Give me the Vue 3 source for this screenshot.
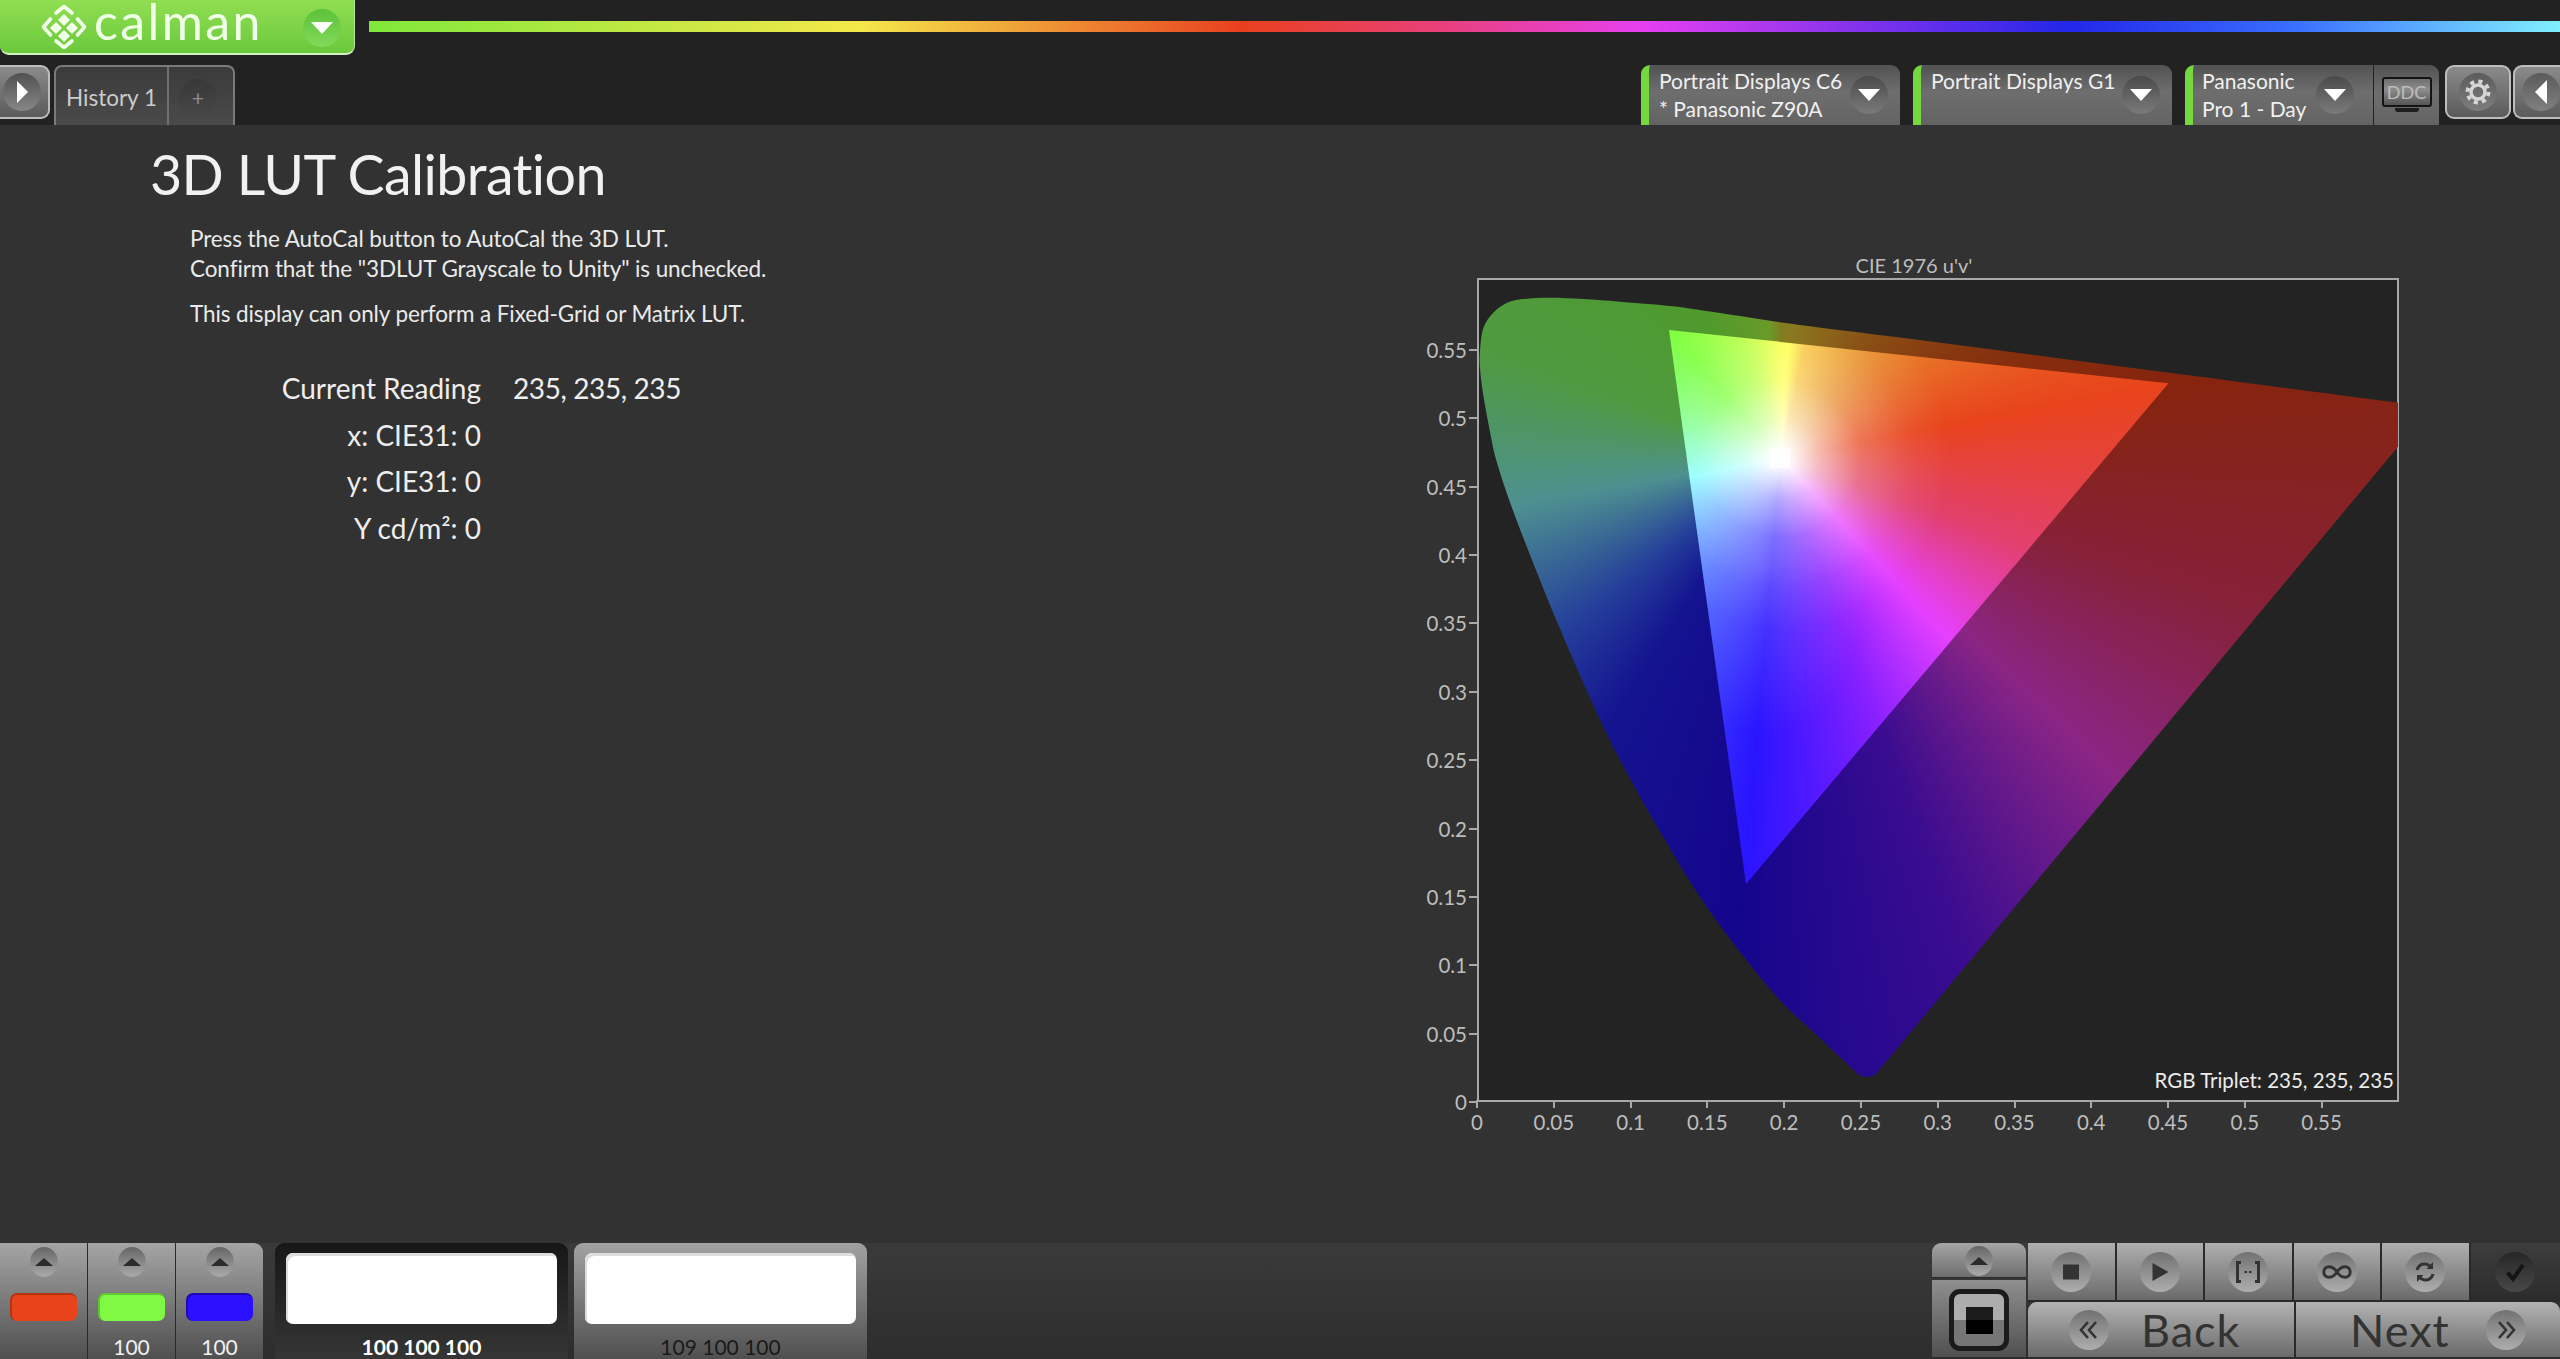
<script setup>
const plotH = 823
const ticks = [0, 0.05, 0.1, 0.15, 0.2, 0.25, 0.3, 0.35, 0.4, 0.45, 0.5, 0.55]
const xTicks = ticks.map((v) => ({ v, left: (v * 1535.6 - 2).toFixed(1) + 'px' }))
const yTicks = ticks.map((v) => ({ v, top: (plotH - v * 1367.3 - 1).toFixed(1) + 'px' }))
const transport = ['stop', 'play', 'range', 'loop', 'sync']
const swatches = [
  { color: '#e8441c', edge: '#b5330f', label: '' },
  { color: '#80f944', edge: '#5fc732', label: '100' },
  { color: '#2a10ff', edge: '#1c0ab0', label: '100' }
]
const readings = [
  { label: 'Current Reading', value: '235, 235, 235' },
  { label: 'x: CIE31: 0', value: '' },
  { label: 'y: CIE31: 0', value: '' },
  { label: 'Y cd/m²: 0', value: '' }
]

// Spectral locus traced from the chart, in plot pixels: bottom vertex, up the left side, along the top.
const locus = [
  [382, 796], [337.5, 754], [305.6, 724], [267, 678], [223, 618], [181, 549], [143, 481], [114, 421], [79.3, 341],
  [53.7, 277.7], [34.6, 227.7], [19.7, 182.7], [13, 152.7], [6.3, 116], [3, 89], [3, 72.7], [6.3, 49.3], [16, 34],
  [29.7, 24], [46, 20], [73, 18.7], [106, 20], [143, 22.7], [193, 27], [233, 32.5], [323, 46], [423, 58.5], [523, 71.5],
  [623, 84.7], [723, 97.7], [921, 123.7]
]
function smooth(points) {
  let d = ''
  for (let i = 0; i < points.length - 1; i++) {
    const p0 = points[Math.max(i - 1, 0)]
    const p1 = points[i]
    const p2 = points[i + 1]
    const p3 = points[Math.min(i + 2, points.length - 1)]
    const c1 = [p1[0] + (p2[0] - p0[0]) / 6, p1[1] + (p2[1] - p0[1]) / 6]
    const c2 = [p2[0] - (p3[0] - p1[0]) / 6, p2[1] - (p3[1] - p1[1]) / 6]
    d += ` C${c1[0].toFixed(1)} ${c1[1].toFixed(1)} ${c2[0].toFixed(1)} ${c2[1].toFixed(1)} ${p2[0]} ${p2[1]}`
  }
  return d
}
const outerClip = `path('M921 167.7 L398 796 Q390 800 382 796${smooth(locus)} Z')`
</script>

<template>
  <div class="app">
    <header class="top">
      <div class="brand-row">
        <div class="logo">
          <svg class="mark" viewBox="0 0 46 46" width="46" height="46">
            <g fill="none" stroke="#f2ffe9" stroke-width="3.6" stroke-linecap="round" stroke-linejoin="round">
              <path d="M15 9 L23 2.5 L31 9" />
              <path d="M9.5 15 L2.5 23 L9.5 31" />
              <path d="M36.500 15 L43.500 23 L36.500 31" />
              <path d="M15 37 L23 43.500 L31 37" />
            </g>
            <g fill="#f2ffe9">
              <path d="M23 10 L29 16 L23 22 L17 16 Z" />
              <path d="M15 18 L21 24 L15 30 L9 24 Z" />
              <path d="M31 18 L37 24 L31 30 L25 24 Z" />
              <path d="M23 26 L29 32 L23 38 L17 32 Z" />
            </g>
          </svg>
          <span class="logo-text">calman</span>
          <span class="orb logo-orb"><i class="tri-down"></i></span>
        </div>
        <div class="rainbow"></div>
      </div>
      <div class="tab-row">
        <button class="nav-btn left-btn"><span class="orb"><i class="tri-right"></i></span></button>
        <div class="tab">
          <span class="tab-label">History 1</span>
          <span class="tab-add"><span class="plus">+</span></span>
        </div>
        <div class="devices">
          <div class="pill">
            <div class="pill-text"><span>Portrait Displays C6</span><span>* Panasonic Z90A</span></div>
            <span class="orb pill-orb"><i class="tri-down"></i></span>
          </div>
          <div class="pill">
            <div class="pill-text"><span>Portrait Displays G1</span><span>&nbsp;</span></div>
            <span class="orb pill-orb"><i class="tri-down"></i></span>
          </div>
          <div class="pill pill-ddc">
            <div class="pill-text"><span>Panasonic</span><span>Pro 1 - Day</span></div>
            <span class="orb pill-orb"><i class="tri-down"></i></span>
            <div class="ddc-cell">
              <div class="ddc-screen">DDC</div>
              <div class="ddc-stand"></div>
            </div>
          </div>
          <button class="nav-btn gear-btn">
            <span class="orb">
              <svg viewBox="0 0 30 30" width="30" height="30">
                <g fill="none" stroke="#d6d6d6">
                  <circle cx="15" cy="15" r="7" stroke-width="3.4" />
                  <circle cx="15" cy="15" r="10.500" stroke-width="4" stroke-dasharray="4.120 4.127" />
                </g>
              </svg>
            </span>
          </button>
          <button class="nav-btn back-btn"><span class="orb"><i class="tri-left"></i></span></button>
        </div>
      </div>
    </header>

    <main class="main">
      <section class="intro">
        <h1 class="title">3D LUT Calibration</h1>
        <div class="copy">
          <p>Press the AutoCal button to AutoCal the 3D LUT.<br />Confirm that the "3DLUT Grayscale to Unity" is unchecked.</p>
          <p class="copy-second">This display can only perform a Fixed-Grid or Matrix LUT.</p>
        </div>
        <div class="readings">
          <template v-for="r in readings" :key="r.label">
            <span class="r-label">{{ r.label }}</span>
            <span class="r-value">{{ r.value }}</span>
          </template>
        </div>
      </section>

      <section class="chart">
        <div class="chart-title">CIE 1976 u'v'</div>
        <div class="plot">
          <div class="gamut-outer" :style="{ clipPath: outerClip }"></div>
          <div class="gamut-inner"></div>
          <div class="marker"></div>
          <div class="triplet">RGB Triplet: 235, 235, 235</div>
          <div v-for="t in yTicks" :key="'y' + t.v" class="ytick" :style="{ top: t.top }">
            <span>{{ t.v }}</span><i></i>
          </div>
          <div v-for="t in xTicks" :key="'x' + t.v" class="xtick" :style="{ left: t.left }">
            <i></i><span>{{ t.v }}</span>
          </div>
        </div>
      </section>
    </main>

    <footer class="bottom">
      <div class="swatch-group">
        <div v-for="s in swatches" :key="s.color" class="swatch-col">
          <span class="orb mini-orb"><i class="tri-up"></i></span>
          <span class="swatch" :style="{ background: s.color, borderColor: s.edge }"></span>
          <span class="swatch-label">{{ s.label }}</span>
        </div>
      </div>
      <div class="card card-active">
        <div class="card-white"></div>
        <span class="card-label">100 100 100</span>
      </div>
      <div class="card card-idle">
        <div class="card-white"></div>
        <span class="card-label">109 100 100</span>
      </div>

      <div class="controls">
        <div class="auto-stack">
          <div class="auto-top"><span class="orb mini-orb"><i class="tri-up"></i></span></div>
          <div class="auto-main">
            <div class="auto-frame"><div class="auto-core"></div></div>
          </div>
        </div>
        <div class="transport">
          <div class="transport-row">
            <div v-for="t in transport" :key="t" class="t-btn">
              <span class="orb t-orb">
                <svg viewBox="0 0 30 30" width="30" height="30">
                  <rect v-if="t === 'stop'" x="7" y="7.500" width="16" height="15" fill="#333" />
                  <path v-else-if="t === 'play'" d="M7.500 6 L23.500 15 L7.500 24 Z" fill="#333" />
                  <g v-else-if="t === 'range'" fill="none" stroke="#333" stroke-width="3">
                    <path d="M8 5.500 H4.500 V24.500 H8" />
                    <path d="M22 5.500 H25.500 V24.500 H22" />
                    <path d="M11.500 15 H14 M16 15 H18.500" stroke-width="2.200" />
                  </g>
                  <path v-else-if="t === 'loop'" d="M15 15 C12 10.500 9.500 9.800 7 9.800 C3.800 9.800 1.800 12.300 1.800 15 C1.800 17.700 3.800 20.200 7 20.200 C9.500 20.200 12 19.500 15 15 C18 10.500 20.500 9.800 23 9.800 C26.200 9.800 28.200 12.300 28.200 15 C28.200 17.700 26.200 20.200 23 20.200 C20.500 20.200 18 19.500 15 15 Z" fill="none" stroke="#333" stroke-width="3" />
                  <g v-else fill="none" stroke="#333" stroke-width="3">
                    <path d="M7 13 C8 8.500 12 6.500 15.500 7 C18 7.300 19.500 8.500 21 10" />
                    <path d="M23 17 C22 21.500 18 23.500 14.500 23 C12 22.700 10.500 21.500 9 20" />
                    <path d="M23 5 V12 H16.500 Z" fill="#333" stroke="none" />
                    <path d="M7 25 V18 H13.500 Z" fill="#333" stroke="none" />
                  </g>
                </svg>
              </span>
            </div>
            <div class="t-btn t-check">
              <span class="orb t-orb check-orb">
                <svg viewBox="0 0 30 30" width="30" height="30">
                  <path d="M7.500 15.500 L13 22 L23 8" fill="none" stroke="#151515" stroke-width="4" />
                </svg>
              </span>
            </div>
          </div>
          <div class="wizard-row">
            <div class="wizard wizard-back">
              <span class="orb t-orb">
                <svg viewBox="0 0 30 30" width="30" height="30">
                  <path d="M14 7 L7 15 L14 23 M22 7 L15 15 L22 23" fill="none" stroke="#333" stroke-width="2.600" />
                </svg>
              </span>
              <span class="wizard-text">Back</span>
            </div>
            <div class="wizard wizard-next">
              <span class="wizard-text">Next</span>
              <span class="orb t-orb">
                <svg viewBox="0 0 30 30" width="30" height="30">
                  <path d="M8 7 L15 15 L8 23 M16 7 L23 15 L16 23" fill="none" stroke="#333" stroke-width="2.600" />
                </svg>
              </span>
            </div>
          </div>
        </div>
      </div>
    </footer>
  </div>
</template>

<style>
html, body { margin: 0; background: #323232; }
</style>

<style scoped>
.app {
  width: 2560px;
  height: 1359px;
  display: flex;
  flex-direction: column;
  overflow: hidden;
  background: #323232;
  font-family: Lato, "Liberation Sans", sans-serif;
  color: #eee;
}
button { padding: 0; font: inherit; cursor: default; }
i { display: block; }

/* shared round button + triangles */
.orb {
  flex: none;
  display: flex;
  align-items: center;
  justify-content: center;
  width: 38px;
  height: 38px;
  border-radius: 50%;
  background: linear-gradient(#4a4a4a, #7b7b7b);
}
.tri-down { width: 0; height: 0; border: 11px solid transparent; border-top: 12px solid #fff; border-bottom: 0; }
.tri-right { width: 0; height: 0; border: 11px solid transparent; border-left: 11px solid #fff; border-right: 0; }
.tri-left { width: 0; height: 0; border: 12px solid transparent; border-right: 12px solid #fff; border-left: 0; }
.tri-up { width: 0; height: 0; border: 9px solid transparent; border-bottom: 8px solid #2b2b2b; border-top: 0; }

/* header */
.top { height: 125px; flex: none; background: #222; display: flex; flex-direction: column; }
.brand-row { height: 55px; display: flex; align-items: flex-start; flex: none; }
.logo {
  width: 355px;
  height: 55px;
  box-sizing: border-box;
  display: flex;
  align-items: center;
  padding-left: 41px;
  border-bottom: 2px solid #d6f3c4;
  border-right: 1px solid #b7e69a;
  border-radius: 0 0 9px 9px;
  background: linear-gradient(#91de52, #6bc93c);
}
.mark { flex: none; }
.logo-text {
  margin-left: 7px;
  margin-top: -11px;
  font-size: 50px;
  font-weight: 400;
  letter-spacing: 2.4px;
  line-height: 36px;
  height: 36px;
  color: #f0ffe8;
  width: 209px;
}
.logo-orb { margin-top: 2px; background: linear-gradient(#5cc23b, #82da59); }
.rainbow {
  flex: 1;
  height: 11px;
  margin: 21px 0 0 14px;
  background: linear-gradient(90deg, #7fe83a 0%, #f5e84a 22.4%, #e8401e 39.8%, #e8407a 48.9%, #e640f0 58%, #2326e8 77.6%, #3a70ff 88%, #80f0ff 100%);
}
.tab-row { flex: 1; display: flex; align-items: flex-start; padding-top: 10px; }
.nav-btn {
  display: flex;
  align-items: center;
  justify-content: center;
  height: 54px;
  box-sizing: border-box;
  border: 2px solid #bdbdbd;
  border-radius: 9px;
  background: linear-gradient(#8a8a8a, #5b5b5b);
}
.left-btn { width: 50px; border-left: 0; border-radius: 0 9px 9px 0; justify-content: flex-start; padding-left: 3px; }
.left-btn .orb { background: linear-gradient(#515151, #878787); }
.tab {
  margin-left: 4px;
  width: 181px;
  height: 60px;
  box-sizing: border-box;
  display: flex;
  border: 2px solid #7a7a7a;
  border-bottom: 0;
  border-radius: 8px 8px 0 0;
  background: linear-gradient(#3b3b3b, #4a4a4a);
}
.tab-label { width: 101px; padding-left: 10px; line-height: 62px; font-size: 22.500px; color: #ccc; border-right: 2px solid #707070; white-space: nowrap; }
.tab-add { flex: 1; display: flex; align-items: center; justify-content: center; padding-right: 6px; }
.plus {
  width: 38px;
  height: 38px;
  margin-top: 3px;
  border-radius: 50%;
  background: linear-gradient(#383838, #474747);
  color: #8c8c8c;
  font-size: 22px;
  line-height: 38px;
  text-align: center;
}
.devices { margin-left: auto; display: flex; align-items: flex-start; }
.pill {
  width: 259px;
  height: 60px;
  box-sizing: border-box;
  margin-right: 13px;
  display: flex;
  align-items: center;
  padding-left: 10px;
  border-left: 8px solid #76d83f;
  border-radius: 9px 9px 0 0;
  background: linear-gradient(#525252, #6e6e6e 45%, #636363);
}
.pill-text { flex: 1; display: flex; flex-direction: column; font-size: 21px; line-height: 28px; white-space: nowrap; color: #f0f0f0; }
.pill-orb { margin-right: 12px; }
.pill-ddc { width: 254px; margin-right: 6px; padding-left: 9px; }
.pill-ddc .pill-orb { margin-right: 19px; }
.ddc-cell {
  width: 66px;
  align-self: stretch;
  box-sizing: border-box;
  border-left: 1px solid #222;
  display: flex;
  flex-direction: column;
  align-items: center;
  padding-top: 12px;
}
.ddc-screen {
  width: 50px;
  height: 30px;
  box-sizing: border-box;
  border: 2px solid #141414;
  border-radius: 3px;
  background: linear-gradient(#6f6f6f, #8d8d8d 40%, #555);
  color: #bdbdbd;
  font-size: 18px;
  line-height: 26px;
  text-align: center;
}
.ddc-stand { width: 24px; height: 4px; background: #1d1d1d; border-radius: 0 0 3px 3px; margin-top: 1px; }
.gear-btn { width: 66px; margin-right: 2px; }
.gear-btn .orb { background: linear-gradient(#5b5b5b, #7e7e7e); }
.back-btn { width: 47px; border-right: 0; border-radius: 9px 0 0 9px; justify-content: flex-start; padding-left: 7px; }
.back-btn .orb { background: linear-gradient(#5b5b5b, #808080); }

/* main */
.main { flex: 1; display: flex; justify-content: space-between; min-height: 0; }
.intro { padding: 19px 0 0 150px; }
.title { margin: 0; font-size: 55.500px; font-weight: 400; line-height: 60px; letter-spacing: -0.6px; color: #f1f1f1; white-space: nowrap; }
.copy { margin: 20px 0 0 40px; font-size: 22.500px; line-height: 30px; letter-spacing: -0.1px; color: #eaeaea; }
.copy p { margin: 0; white-space: nowrap; }
.copy-second { padding-top: 15px; }
.readings {
  margin: 36px 0 0 129px;
  display: grid;
  grid-template-columns: 202px auto;
  column-gap: 32px;
  font-size: 28px;
  line-height: 46.700px;
  color: #eee;
}
.r-label { text-align: right; white-space: nowrap; }
.r-value { white-space: nowrap; letter-spacing: -0.4px; }

/* chart */
.chart { width: 922px; margin: 128px 161px 0 0; }
.chart-title { height: 25px; line-height: 24px; padding-right: 48px; text-align: center; font-size: 20px; color: #bdbdbd; }
.plot {
  position: relative;
  width: 922px;
  height: 824px;
  box-sizing: border-box;
  border: 2px solid #a8a8a8;
  background: #232323;
}
.gamut-outer,
.gamut-inner { position: absolute; left: -2px; top: -1px; width: 921px; height: 823px; }
.gamut-outer {
  background: conic-gradient(at 304px 179px,
    #807c22 0deg, #8a7a20 4deg, #8a5416 33deg, #86300e 65deg, #86240d 79deg, #862139 108deg, #8a2585 134deg,
    #3a0c90 160deg, #14068c 185deg, #141490 213deg, #25409a 232deg, #4d9090 260deg, #4f9a40 290deg,
    #4e9a2c 330deg, #6a9a28 355deg, #807c22 360deg);
}
.gamut-inner {
  background:
    radial-gradient(circle 170px at 304px 179px, #fff 0, rgba(255,255,255,.95) 11px, rgba(255,255,255,.6) 40px, rgba(255,255,255,.26) 80px, rgba(255,255,255,.07) 130px, rgba(255,255,255,0) 170px),
    radial-gradient(ellipse 110px 170px at 285px 285px, rgba(255,255,255,.2), rgba(255,255,255,0)),
    conic-gradient(at 304px 179px,
      #fcff4c 0deg, #ffff50 4deg, #f8c845 12deg, #e8902f 40deg, #e8441c 79deg, #e2406e 110deg, #e640ff 137deg, #8a20ff 160deg,
      #2a14ff 185deg, #80ffff 258deg, #80ff70 300deg, #80ff40 319deg, #c0ff48 345deg, #ecff4c 356deg, #fcff4c 360deg);
  clip-path: polygon(192px 51px, 691.500px 104.300px, 269px 605px);
}
.marker {
  position: absolute;
  left: 291px;
  top: 168px;
  width: 20px;
  height: 20px;
  box-sizing: border-box;
  border: 1px solid rgba(255, 255, 255, .85);
  background: rgba(255, 255, 255, .7);
}
.triplet { position: absolute; right: 3px; bottom: 8px; font-size: 20.500px; line-height: 24px; color: #ececec; white-space: nowrap; }
.ytick {
  position: absolute;
  left: -68px;
  width: 66px;
  height: 0;
  display: flex;
  align-items: center;
  justify-content: flex-end;
  font-size: 20.500px;
  color: #bdbdbd;
}
.ytick i { width: 8px; height: 2px; margin-left: 2px; background: #a8a8a8; }
.xtick {
  position: absolute;
  top: 820px;
  width: 0;
  display: flex;
  flex-direction: column;
  align-items: center;
  font-size: 20.500px;
  color: #bdbdbd;
}
.xtick i { flex: none; width: 2px; height: 8px; background: #a8a8a8; }
.xtick span { margin-top: 2px; line-height: 24px; }

/* bottom toolbar */
.bottom {
  height: 116px;
  flex: none;
  display: flex;
  align-items: flex-start;
  background: linear-gradient(#3a3a3a, #2d2d2d);
}
.swatch-group { width: 263px; height: 116px; display: flex; border-radius: 0 9px 0 0; overflow: hidden; }
.swatch-col {
  flex: 1;
  display: flex;
  flex-direction: column;
  align-items: center;
  padding-top: 4px;
  box-sizing: border-box;
  background: linear-gradient(#a5a5a5, #4f4f4f);
  border-right: 1px solid #2a2a2a;
}
.swatch-col:last-child { border-right: 0; }
.mini-orb { width: 28px; height: 30px; background: linear-gradient(#666, #aaa); }
.swatch {
  width: 67px;
  height: 28px;
  box-sizing: border-box;
  margin-top: 16px;
  border-top: 2px solid;
  border-left: 2px solid;
  border-radius: 7px;
}
.swatch-label { margin-top: 14px; font-size: 21px; line-height: 24px; color: #f0f0f0; }
.card {
  width: 293px;
  height: 116px;
  margin-left: 12px;
  box-sizing: border-box;
  padding: 10px 11px 0;
  border-radius: 9px 9px 0 0;
  display: flex;
  flex-direction: column;
  align-items: center;
}
.card-active { background: linear-gradient(#171717, #353535); }
.card-idle { margin-left: 6px; background: linear-gradient(#a2a2a2, #505050); }
.card-white { width: 100%; height: 71px; border-radius: 7px; background: #fff; box-shadow: inset 3px 4px 0 -1px #ddd; }
.card-label { margin-top: 11px; font-size: 21px; line-height: 24px; white-space: nowrap; }
.card-active .card-label { color: #fff; font-weight: 700; }
.card-idle .card-label { color: #1a1a1a; }
.controls { margin-left: auto; display: flex; }
.auto-stack { width: 94px; display: flex; flex-direction: column; margin-right: 2px; }
.auto-top {
  height: 35px;
  display: flex;
  justify-content: center;
  align-items: center;
  padding-top: 2px;
  box-sizing: border-box;
  border-radius: 9px 9px 0 0;
  background: linear-gradient(#a5a5a5, #6e6e6e);
  border-bottom: 1px solid #2a2a2a;
}
.auto-main {
  flex: 1;
  display: flex;
  justify-content: center;
  padding-top: 9px;
  margin-top: 2px;
  background: linear-gradient(#8f8f8f, #505050);
}
.auto-frame {
  width: 60px;
  height: 62px;
  box-sizing: border-box;
  border: 5px solid #1b1b1b;
  border-radius: 11px;
  display: flex;
  align-items: center;
  justify-content: center;
  background: linear-gradient(#adadad 50%, #767676 50%);
}
.auto-core { width: 27px; height: 27px; background: linear-gradient(#1b1b1b 50%, #000 50%); }
.transport { width: 532px; display: flex; flex-direction: column; }
.transport-row { height: 59px; display: flex; }
.t-btn {
  width: 88.500px;
  box-sizing: border-box;
  display: flex;
  align-items: center;
  justify-content: center;
  background: linear-gradient(#afafaf, #6a6a6a);
  border-right: 2px solid #2a2a2a;
  border-bottom: 2px solid #2a2a2a;
}
.t-btn.t-check { flex: 1; border-right: 0; background: linear-gradient(#3d3d3d, #2c2c2c); }
.t-orb { width: 40px; height: 40px; background: linear-gradient(#727272, #aeaeae); }
.check-orb { background: linear-gradient(#272727, #484848); }
.wizard-row { flex: 1; display: flex; }
.wizard {
  flex: none;
  height: 55px;
  box-sizing: border-box;
  display: flex;
  align-items: center;
  background: linear-gradient(#b3b3b3, #6a6a6a);
  font-size: 45px;
  letter-spacing: 1px;
  color: #333;
  line-height: 50px;
}
.wizard-back { width: 268px; padding-left: 41px; border-right: 2px solid #2a2a2a; border-radius: 9px 0 0 0; }
.wizard-next { width: 264px; padding-left: 54px; border-radius: 0 9px 0 0; }
.wizard-back .wizard-text { margin-left: 32px; }
.wizard-next .wizard-text { width: 136px; }
</style>
